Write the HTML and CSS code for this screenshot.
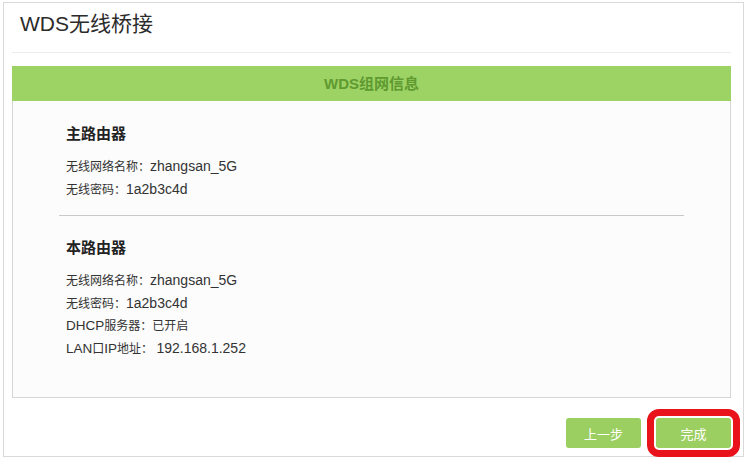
FILE: index.html
```html
<!DOCTYPE html>
<html lang="zh-CN">
<head>
<meta charset="utf-8">
<title>WDS无线桥接</title>
<link rel="stylesheet" href="styles.css">
</head>
<body>
<div class="frame">
  <div class="title">WDS无线桥接</div>
  <div class="panel">
    <div class="panel-head">WDS组网信息</div>
    <div class="panel-body">
      <div class="section first">
        <div class="sec-title">主路由器</div>
        <div class="line">无线网络名称：<span class="val">zhangsan_5G</span></div>
        <div class="line">无线密码：<span class="val">1a2b3c4d</span></div>
      </div>
      <div class="section">
        <div class="sec-title">本路由器</div>
        <div class="line">无线网络名称：<span class="val">zhangsan_5G</span></div>
        <div class="line">无线密码：<span class="val">1a2b3c4d</span></div>
        <div class="line"><span class="lat">DHCP</span>服务器：已开启</div>
        <div class="line"><span class="lat">LAN</span>口<span class="lat">IP</span>地址： <span class="val">192.168.1.252</span></div>
      </div>
    </div>
  </div>
  <div class="actions">
    <button class="btn">上一步</button>
    <button class="btn btn-marked">完成</button>
  </div>
</div>
</body>
</html>
```

FILE: styles.css
```css
html, body {
  margin: 0;
  padding: 0;
  background: #ffffff;
}
body {
  font-family: "Liberation Sans", "Noto Sans CJK SC", sans-serif;
  color: #333333;
}
.frame {
  margin: 2px 0 0 3px;
  width: 741px;
  height: 455px;
  box-sizing: border-box;
  border: 1px solid #d9d9d9;
  padding: 0 12px 0 8px;
  display: flex;
  flex-direction: column;
}
.title {
  font-size: 21px;
  line-height: 42px;
  padding: 0 0 7px 8px;
  border-bottom: 1px solid #ececec;
  color: #2b2b2b;
}
.panel {
  margin-top: 13px;
  border: 1px solid #d6d6d6;
  border-top: none;
  background: #fcfcfc;
}
.panel-head {
  background: #9dd264;
  height: 35px;
  line-height: 35px;
  text-align: center;
  font-size: 15px;
  font-weight: bold;
  color: #5f9a31;
  margin: 0 -1px;
}
.panel-body {
  padding: 0 46px 37px 46px;
}
.section {
  padding: 22px 0 0 7px;
}
.section.first {
  padding-top: 23px;
  padding-bottom: 14px;
  border-bottom: 1px solid #c9c9c9;
}
.sec-title {
  font-size: 15px;
  font-weight: bold;
  line-height: 20px;
  margin-bottom: 12px;
  color: #222;
}
.line {
  font-size: 12px;
  line-height: 22.5px;
  height: 22.5px;
  color: #333;
}
.val {
  font-size: 14px;
  line-height: 1;
}
.lat {
  font-size: 13.5px;
  line-height: 1;
}
.actions {
  margin-top: 20px;
  display: flex;
  justify-content: flex-end;
  gap: 15px;
}
.btn {
  width: 75px;
  height: 30px;
  border: none;
  border-radius: 3px;
  background: #9ccf61;
  color: #ffffff;
  font-family: "Liberation Sans", "Noto Sans CJK SC", sans-serif;
  font-size: 13px;
  padding: 0;
}
.btn-marked {
  outline: 7px solid #e8131b;
  outline-offset: 2px;
}
```
